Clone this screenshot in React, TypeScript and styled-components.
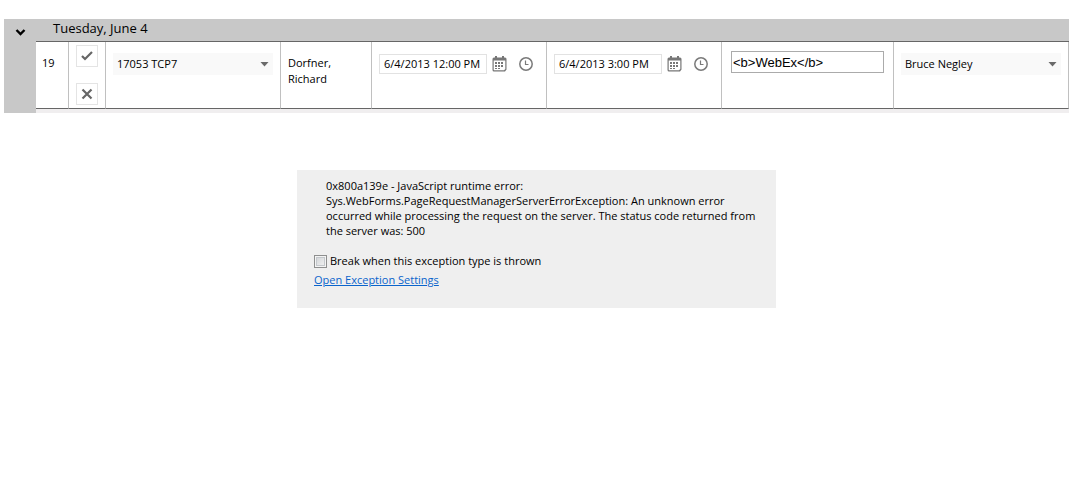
import React from 'react';
import styled, { createGlobalStyle } from 'styled-components';

const GlobalStyle = createGlobalStyle`
  *, *::before, *::after { box-sizing: border-box; }
  body {
    margin: 0;
    padding: 19px 4px;
    background: #fff;
    color: #000;
    font-family: "Segoe UI", "Open Sans", "Noto Sans", sans-serif;
    font-size: 11px;
    line-height: 16px;
  }
  button, input, select { font: inherit; color: inherit; }
`;

const Grid = styled.table`
  width: 100%;
  table-layout: fixed;
  border-collapse: separate;
  border-spacing: 0;
`;

const ExpandCell = styled.td`
  background: #c8c8c8;
  padding: 7px 11px;
  vertical-align: top;
`;

const GroupCell = styled.th`
  height: 23px;
  padding: 0 17px 5px;
  background: #c8c8c8;
  border-bottom: 1px solid #666;
  font-size: 13px;
  font-weight: 400;
  line-height: 16px;
  text-align: left;
`;

const Cell = styled.td<{ $top?: number; $side?: number }>`
  height: 67px;
  padding: ${p => p.$top ?? 13}px ${p => p.$side ?? 7}px 0;
  border-right: 1px solid #c0c0c0;
  border-bottom: 1px solid #666;
  vertical-align: top;
`;

const FooterCell = styled.td`
  height: 4px;
  padding: 0;
  background: #f0eeef;
`;

const IconButton = styled.button`
  display: flex;
  padding: 0;
  border: 0;
  background: none;
  cursor: pointer;
`;

const Actions = styled.div`
  display: flex;
  flex-direction: column;
  gap: 16px;
`;

const ActionButton = styled.button`
  display: flex;
  align-items: center;
  justify-content: center;
  width: 22px;
  height: 22px;
  padding: 0;
  border: 1px solid #e4e4e4;
  background: #fff;
  cursor: pointer;
`;

const SelectBox = styled.div`
  position: relative;
`;

const Select = styled.select`
  display: block;
  width: 100%;
  height: 22px;
  padding: 0 20px 0 4px;
  border: 0;
  border-radius: 0;
  appearance: none;
  background: #f9f9f9;
`;

const SelectArrow = styled.svg`
  position: absolute;
  top: 9px;
  right: 4px;
  pointer-events: none;
`;

const DateField = styled.div`
  display: flex;
  align-items: center;
`;

const DateInput = styled.input`
  width: 108px;
  height: 20px;
  margin-right: 5px;
  padding: 0 4px 2px;
  border: 1px solid #e2e2e2;
  background: #fff;
`;

const DateIcons = styled.div`
  display: flex;
  gap: 11px;
`;

const NoteInput = styled.input`
  display: block;
  width: 100%;
  height: 22px;
  padding: 0 1px;
  border: 1px solid #ababab;
  border-radius: 0;
  background: #fff;
  font-family: Arial, "Liberation Sans", sans-serif;
  font-size: 13px;
`;

const ErrorPanel = styled.section`
  max-width: 479px;
  margin: 57px auto 0;
  padding: 8px 12px 20px 17px;
  background: #efefef;
`;

const Message = styled.p`
  margin: 0 0 15px;
  padding-left: 12px;
  line-height: 15px;
  white-space: pre-line;
`;

const CheckLabel = styled.label`
  display: flex;
  align-items: center;
  gap: 3px;
  height: 16px;
`;

const CheckBox = styled.input`
  appearance: none;
  width: 13px;
  height: 13px;
  margin: 0;
  border: 1px solid #8e8f8f;
  background: linear-gradient(135deg, #cdd0d3, #f6f6f6);
  box-shadow: inset 0 0 0 1px #f4f4f4, inset 0 0 0 2px #c4c8cc;
`;

const SettingsLink = styled.a`
  display: block;
  width: fit-content;
  margin-top: 3px;
  color: #0a64cc;
  text-decoration: underline;
`;

const CalendarIcon = () => (
  <svg width="15" height="16" viewBox="0 0 15 16" fill="#777" aria-hidden="true">
    <path d="M2 1.500h11A1.500 1.500 0 0 1 14.500 3v10.500L13 15.500H2A1.500 1.500 0 0 1 .5 14V3A1.500 1.500 0 0 1 2 1.500zM1.700 4.500v9.300c0 .3.200.5.500.5h9.800l1.300-1.300V4.500z" fillRule="evenodd" />
    <path d="M3 0h2v3H3zM10 0h2v3h-2z" />
    <path d="M6 6h2v2H6zM9 6h2v2H9zM3 9h2v2H3zM6 9h2v2H6zM9 9h2v2H9zM3 12h2v1H3zM6 12h2v1H6zM3 6h2v2H3z" />
  </svg>
);

const ClockIcon = () => (
  <svg width="15" height="16" viewBox="0 0 15 16" fill="none" stroke="#7a7a7a" aria-hidden="true">
    <circle cx="8" cy="8" r="6.200" strokeWidth="1.500" />
    <path d="M7.500 4.500v4h3" strokeWidth="1.200" />
  </svg>
);

function DropDown({ label, value }: { label: string; value: string }) {
  return (
    <SelectBox>
      <Select aria-label={label} defaultValue={value}>
        <option>{value}</option>
      </Select>
      <SelectArrow width="9" height="5" viewBox="0 0 9 5" aria-hidden="true">
        <path d="M.5 0h8l-4 4.500z" fill="#6a6a6a" />
      </SelectArrow>
    </SelectBox>
  );
}

function DateTime({ label, value }: { label: string; value: string }) {
  return (
    <DateField>
      <DateInput aria-label={label} defaultValue={value} />
      <DateIcons>
        <IconButton type="button" aria-label={`${label} date`}><CalendarIcon /></IconButton>
        <IconButton type="button" aria-label={`${label} time`}><ClockIcon /></IconButton>
      </DateIcons>
    </DateField>
  );
}

const columns = [32, 33, 37, 175, 91, 175, 175, 172];

const message = `0x800a139e - JavaScript runtime error:
Sys.WebForms.PageRequestManagerServerErrorException: An unknown error
occurred while processing the request on the server. The status code returned from
the server was: 500`;

export default function App() {
  return (
    <>
      <GlobalStyle />
      <Grid>
        <colgroup>
          {columns.map((width, i) => <col key={i} width={width} />)}
          <col />
        </colgroup>
        <tbody>
          <tr>
            <ExpandCell rowSpan={3}>
              <IconButton type="button" aria-label="Collapse group">
                <svg width="11" height="12" viewBox="0 0 11 12" fill="none" stroke="#000" aria-hidden="true">
                  <path d="M1.500 4l4 4 4-4" strokeWidth="2.400" />
                </svg>
              </IconButton>
            </ExpandCell>
            <GroupCell colSpan={8} scope="colgroup">Tuesday, June 4</GroupCell>
          </tr>
          <tr>
            <Cell $side={6}>19</Cell>
            <Cell $top={3}>
              <Actions>
                <ActionButton type="button" aria-label="Update">
                  <svg width="12" height="10" viewBox="0 0 12 10" fill="none" stroke="#666" aria-hidden="true">
                    <path d="M1 5l3 3 7-7" strokeWidth="2.200" />
                  </svg>
                </ActionButton>
                <ActionButton type="button" aria-label="Cancel">
                  <svg width="12" height="12" viewBox="0 0 12 12" fill="none" stroke="#666" aria-hidden="true">
                    <path d="M1.500 1.500l9 9M10.500 1.500l-9 9" strokeWidth="2.200" />
                  </svg>
                </ActionButton>
              </Actions>
            </Cell>
            <Cell $top={11}><DropDown label="Job" value="17053 TCP7" /></Cell>
            <Cell>Dorfner,<br />Richard</Cell>
            <Cell $top={12}><DateTime label="Start" value="6/4/2013 12:00 PM" /></Cell>
            <Cell $top={12}><DateTime label="End" value="6/4/2013 3:00 PM" /></Cell>
            <Cell $top={9} $side={9}><NoteInput aria-label="Notes" defaultValue="<b>WebEx</b>" /></Cell>
            <Cell $top={11}><DropDown label="Contact" value="Bruce Negley" /></Cell>
          </tr>
          <tr>
            <FooterCell colSpan={8} />
          </tr>
        </tbody>
      </Grid>
      <ErrorPanel>
        <Message>{message}</Message>
        <CheckLabel>
          <CheckBox type="checkbox" />
          Break when this exception type is thrown
        </CheckLabel>
        <SettingsLink href="#settings">Open Exception Settings</SettingsLink>
      </ErrorPanel>
    </>
  );
}
